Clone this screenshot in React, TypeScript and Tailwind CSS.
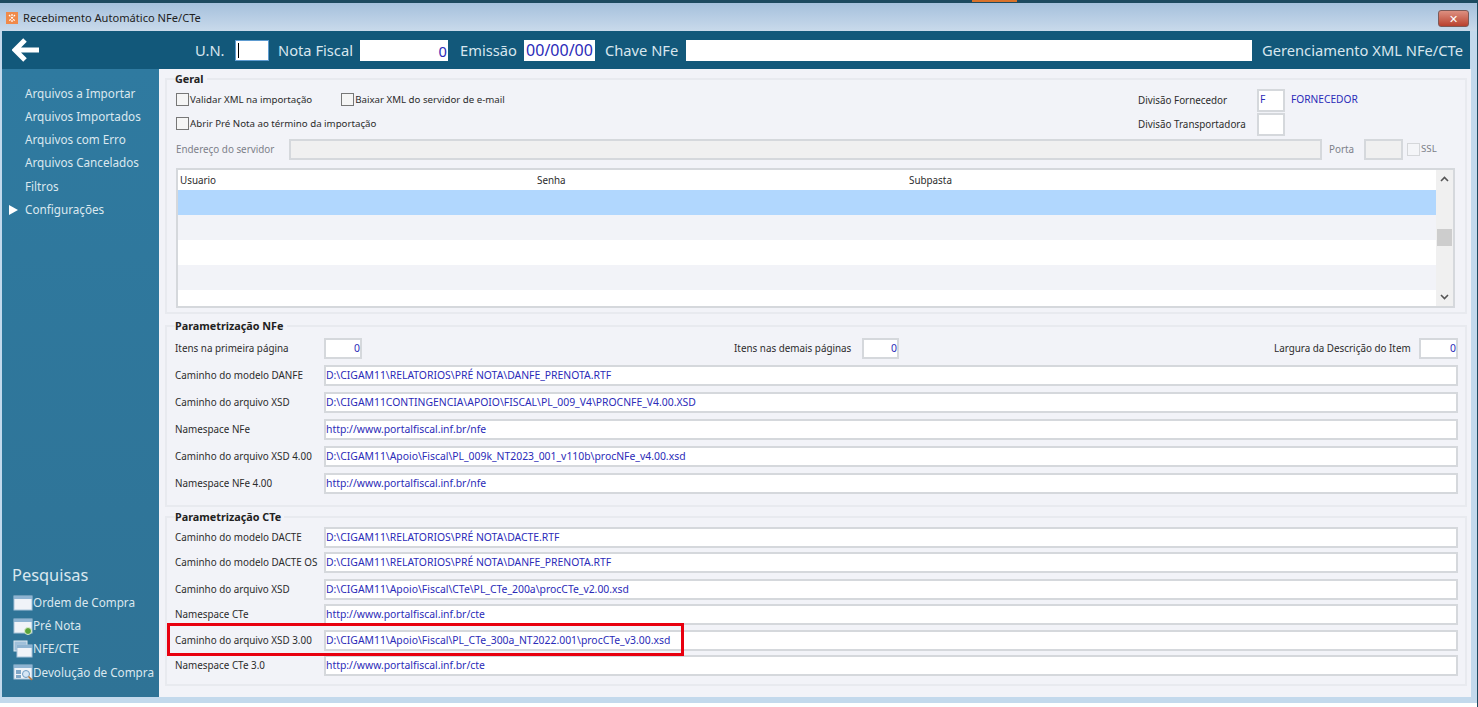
const navItems = [
  "Arquivos a Importar",
  "Arquivos Importados",
  "Arquivos com Erro",
  "Arquivos Cancelados",
  "Filtros",
  "Configurações",
];

const nfeRows = [
  ["Caminho do modelo DANFE", "D:\\CIGAM11\\RELATORIOS\\PRÉ NOTA\\DANFE_PRENOTA.RTF"],
  ["Caminho do arquivo XSD", "D:\\CIGAM11CONTINGENCIA\\APOIO\\FISCAL\\PL_009_V4\\PROCNFE_V4.00.XSD"],
  ["Namespace NFe", "http://www.portalfiscal.inf.br/nfe"],
  ["Caminho do arquivo XSD 4.00", "D:\\CIGAM11\\Apoio\\Fiscal\\PL_009k_NT2023_001_v110b\\procNFe_v4.00.xsd"],
  ["Namespace NFe 4.00", "http://www.portalfiscal.inf.br/nfe"],
];

const cteRows = [
  ["Caminho do modelo DACTE", "D:\\CIGAM11\\RELATORIOS\\PRÉ NOTA\\DACTE.RTF", "h-[25px]"],
  ["Caminho do modelo DACTE OS", "D:\\CIGAM11\\RELATORIOS\\PRÉ NOTA\\DANFE_PRENOTA.RTF", "h-[27px]"],
  ["Caminho do arquivo XSD", "D:\\CIGAM11\\Apoio\\Fiscal\\CTe\\PL_CTe_200a\\procCTe_v2.00.xsd", "h-[25px]"],
  ["Namespace CTe", "http://www.portalfiscal.inf.br/cte", "h-[26px]"],
  ["Caminho do arquivo XSD 3.00", "D:\\CIGAM11\\Apoio\\Fiscal\\PL_CTe_300a_NT2022.001\\procCTe_v3.00.xsd", "h-[25px]"],
  ["Namespace CTe 3.0", "http://www.portalfiscal.inf.br/cte", "h-[25px]"],
];

function Field({ value, className = "" }: { value?: string; className?: string }) {
  return (
    <div className={`flex h-[21px] items-center border-2 border-[#d5d8dc] bg-white text-[10.4px] text-[#2b2bb8] ${className}`}>
      {value}
    </div>
  );
}

function Check({ label, disabled }: { label: string; disabled?: boolean }) {
  return (
    <div className={`flex items-center gap-[1px] text-[9.7px] ${disabled ? "text-[#7c8088]" : ""}`}>
      <span className={`h-[13px] w-[13px] border ${disabled ? "border-[#d5d7da] bg-[#f4f5f8]" : "border-[#777] bg-[#f5f5f5]"}`} />
      <span>{label}</span>
    </div>
  );
}

function PathRow({ label, value, height = "h-[27px]" }: { label: string; value: string; height?: string }) {
  return (
    <div className={`flex items-start ${height}`}>
      <span className="w-[149px] shrink-0 whitespace-nowrap leading-[21px]">{label}</span>
      <Field value={value} className="w-[1134px]" />
    </div>
  );
}

function Group({ title, className, children }: { title: string; className: string; children: React.ReactNode }) {
  return (
    <fieldset className={`mx-[6px] w-[1302px] border-2 border-[#e8eaef] pl-[8px] ${className}`}>
      <legend className="pr-[3px] text-[10.8px] leading-[13px] font-bold text-[#222]">{title}</legend>
      {children}
    </fieldset>
  );
}

function SearchIcon({ kind }: { kind: number }) {
  return (
    <svg width="20" height="18" viewBox="0 0 20 18" className="shrink-0">
      {kind === 2 && <rect x="1" y="1" width="13" height="10" fill="#9fc0da" stroke="#dfe8f0" />}
      <rect x={kind === 2 ? 4 : 1} y={kind === 2 ? 5 : 2} width={kind === 2 ? 15 : 18} height={kind === 2 ? 12 : 14} fill="#f0f3f8" stroke="#a9c4da" />
      <rect x={kind === 2 ? 4 : 1} y={kind === 2 ? 5 : 2} width={kind === 2 ? 15 : 18} height="3" fill="#8fb4d2" />
      {kind === 1 && <circle cx="15" cy="14" r="3.5" fill="#5aa43a" stroke="#dcecd0" />}
      {kind === 3 && (
        <>
          <rect x="3" y="7" width="5" height="4" fill="#7fa6c6" />
          <rect x="3" y="12" width="5" height="3" fill="#7fa6c6" />
          <circle cx="13" cy="11" r="3.5" fill="#d6e6f5" stroke="#6f9cc2" />
          <path d="M15.5 13.5L19 17" stroke="#b9773a" strokeWidth="1.6" />
        </>
      )}
    </svg>
  );
}

export default function App() {
  return (
    <div
      className="relative flex h-[707px] w-[1478px] flex-col overflow-hidden border-r border-[#1d4a60] bg-[#c3d9ec] text-[9.85px] text-[#2b2b2b]"
      style={{ fontFamily: '"Noto Sans", "DejaVu Sans", sans-serif' }}
    >
      {/* top strip */}
      <div className="flex h-[3px] shrink-0 bg-[#1d4a60]">
        <div className="ml-[972px] h-[2px] w-[45px] bg-[#d9722b]" />
      </div>

      {/* title bar */}
      <div className="flex h-[28px] shrink-0 items-center bg-gradient-to-b from-[#a5c0dc] to-[#c9daeb] pl-[6px] pr-[8px] pt-[2px]">
        <svg width="12" height="12" viewBox="0 0 12 12" className="shrink-0">
          <rect width="12" height="12" fill="#f08a4a" />
          <path d="M3 3L9 9M9 3L3 9M6 2V10" stroke="#fff" strokeWidth="1.2" strokeDasharray="2 1" />
        </svg>
        <span className="ml-[5px] text-[11.1px] text-[#1e1e1e]">Recebimento Automático NFe/CTe</span>
        <div className="ml-auto flex h-[17px] w-[31px] items-center justify-center rounded-[3px] border border-[#7c5a58] bg-gradient-to-b from-[#dd8f80] to-[#b8402e] text-[11px] leading-none font-bold text-white">
          ✕
        </div>
      </div>

      {/* header */}
      <div className="mx-[2px] flex h-[38px] w-[1468px] shrink-0 items-center bg-[#12587a] text-[14.7px] whitespace-nowrap text-[#d8e6ee]">
        <svg width="28" height="24" viewBox="0 0 28 24" className="ml-[10px]">
          <path d="M13 2L3 12L13 22M3 12H27" fill="none" stroke="#fff" strokeWidth="5" />
        </svg>
        <span className="ml-[155px] w-[40px]">U.N.</span>
        <div className="h-[21px] w-[34px] border border-[#5d9bd0] bg-white pl-[2px]">
          <div className="mt-[2px] h-[15px] w-[1px] bg-black" />
        </div>
        <span className="ml-[9px] w-[82px]">Nota Fiscal</span>
        <div className="h-[21px] w-[88px] bg-white pr-[1px] text-right leading-[22px] text-[#2b2bb8]">0</div>
        <span className="ml-[12px] w-[64px]">Emissão</span>
        <div className="h-[21px] w-[71px] bg-white text-center text-[16px] leading-[21px] text-[#2b2bb8]">00/00/00</div>
        <span className="ml-[10px] w-[81px]">Chave NFe</span>
        <div className="h-[21px] w-[566px] bg-white" />
        <span className="ml-[10px]">Gerenciamento XML NFe/CTe</span>
      </div>

      {/* body */}
      <div className="ml-[2px] flex h-[628px] w-[1469px] shrink-0">
        <aside className="flex w-[157px] shrink-0 flex-col bg-gradient-to-b from-[#2f7aa0] to-[#2f7396] pt-[13px] text-[11.7px] text-[#dbe8ef]">
          <nav className="flex flex-col">
            {navItems.map((item, i) => (
              <div key={item} className="relative flex h-[23.2px] items-center pl-[23px]">
                {i === 5 && <span className="absolute left-[7px] h-0 w-0 border-y-[5px] border-l-[9px] border-y-transparent border-l-white" />}
                {item}
              </div>
            ))}
          </nav>
          <div className="mt-auto pb-[13px]">
            <div className="pl-[10px] text-[16.4px] leading-[22px]">Pesquisas</div>
            <div className="mt-[5px] flex flex-col">
              {["Ordem de Compra", "Pré Nota", "NFE/CTE", "Devolução de Compra"].map((item, i) => (
                <div key={item} className="flex h-[23.2px] items-center pl-[11px]">
                  <SearchIcon kind={i} />
                  {item}
                </div>
              ))}
            </div>
          </div>
        </aside>

        <main className="flex min-w-0 flex-1 flex-col bg-[#f2f3f8] pt-[3px]">
          <Group title="Geral" className="h-[242px]">
            <div className="pl-[1px]">
              <div className="flex">
                <div className="flex w-[962px] flex-col pt-[3px]">
                  <div className="flex h-[24px] items-center gap-[29px]">
                    <Check label="Validar XML na importação" />
                    <Check label="Baixar XML do servidor de e-mail" />
                  </div>
                  <div className="flex h-[24px] items-center">
                    <Check label="Abrir Pré Nota ao término da importação" />
                  </div>
                </div>
                <div className="flex flex-col pt-[3px]">
                  <div className="flex h-[24px] items-center">
                    <span className="w-[119px]">Divisão Fornecedor</span>
                    <Field value="F" className="w-[28px] !h-[23px] px-[1px]" />
                    <span className="ml-[6px] text-[10.2px] text-[#2b2bb8]">FORNECEDOR</span>
                  </div>
                  <div className="flex h-[25px] items-center">
                    <span className="w-[119px]">Divisão Transportadora</span>
                    <Field className="w-[28px] !h-[23px]" />
                  </div>
                </div>
              </div>
              <div className="mt-[2px] flex h-[21px] items-center text-[#7c8088]">
                <span className="w-[113px] whitespace-nowrap">Endereço do servidor</span>
                <div className="h-[21px] w-[1033px] border-2 border-[#d5d8dc] bg-[#f0f0f0]" />
                <span className="ml-[7px] w-[35px]">Porta</span>
                <div className="h-[21px] w-[39px] border-2 border-[#d5d8dc] bg-[#f0f0f0]" />
                <div className="ml-[4px]">
                  <Check label="SSL" disabled />
                </div>
              </div>
              <div className="mt-[8px] flex h-[140px] w-[1279px] border-2 border-[#d5d8dc] bg-white">
                <div className="flex flex-1 flex-col">
                  <div className="flex h-[20px] shrink-0 items-end pb-[2px]">
                    <span className="w-[359px] pl-[2px]">Usuario</span>
                    <span className="w-[372px]">Senha</span>
                    <span>Subpasta</span>
                  </div>
                  <div className="h-[25px] bg-[#b1d7fe]" />
                  <div className="h-[25px] bg-[#f2f3f8]" />
                  <div className="h-[25px]" />
                  <div className="h-[25px] bg-[#f2f3f8]" />
                </div>
                <div className="flex w-[17px] shrink-0 flex-col items-center justify-between bg-[#f0f0f0] py-[6px] text-[#555]">
                  <svg width="9" height="6" viewBox="0 0 9 6"><path d="M1 5L4.5 1.5L8 5" fill="none" stroke="#555" strokeWidth="1.6" /></svg>
                  <div className="h-[17px] w-[15px] -translate-y-[1px] bg-[#cdcdcd]" />
                  <svg width="9" height="6" viewBox="0 0 9 6"><path d="M1 1L4.5 4.5L8 1" fill="none" stroke="#555" strokeWidth="1.6" /></svg>
                </div>
              </div>
            </div>
          </Group>

          <Group title="Parametrização NFe" className="mt-[5px] h-[188px] pt-[6px]">
            <div className="flex h-[27px] items-start">
              <span className="w-[149px] leading-[21px]">Itens na primeira página</span>
              <Field value="0" className="w-[38px] justify-end" />
              <span className="ml-[372px] w-[128px] whitespace-nowrap leading-[21px]">Itens nas demais páginas</span>
              <Field value="0" className="w-[37px] justify-end" />
              <span className="ml-[375px] w-[145px] whitespace-nowrap leading-[21px]">Largura da Descrição do Item</span>
              <Field value="0" className="w-[39px] justify-end" />
            </div>
            {nfeRows.map(([label, value]) => (
              <PathRow key={label} label={label} value={value} />
            ))}
          </Group>

          <Group title="Parametrização CTe" className="mt-[3px] h-[176px] pt-[4px]">
            {cteRows.map(([label, value, height]) => (
              <PathRow key={label} label={label} value={value} height={height} />
            ))}
          </Group>
        </main>
      </div>

      {/* window bottom edge */}
      <div className="mt-auto h-[4px] shrink-0 bg-white" />

      {/* highlight drawn over the screenshot */}
      <div className="absolute top-[623px] left-[167px] h-[33px] w-[517px] border-[3px] border-[#e8000f]" />
    </div>
  );
}
